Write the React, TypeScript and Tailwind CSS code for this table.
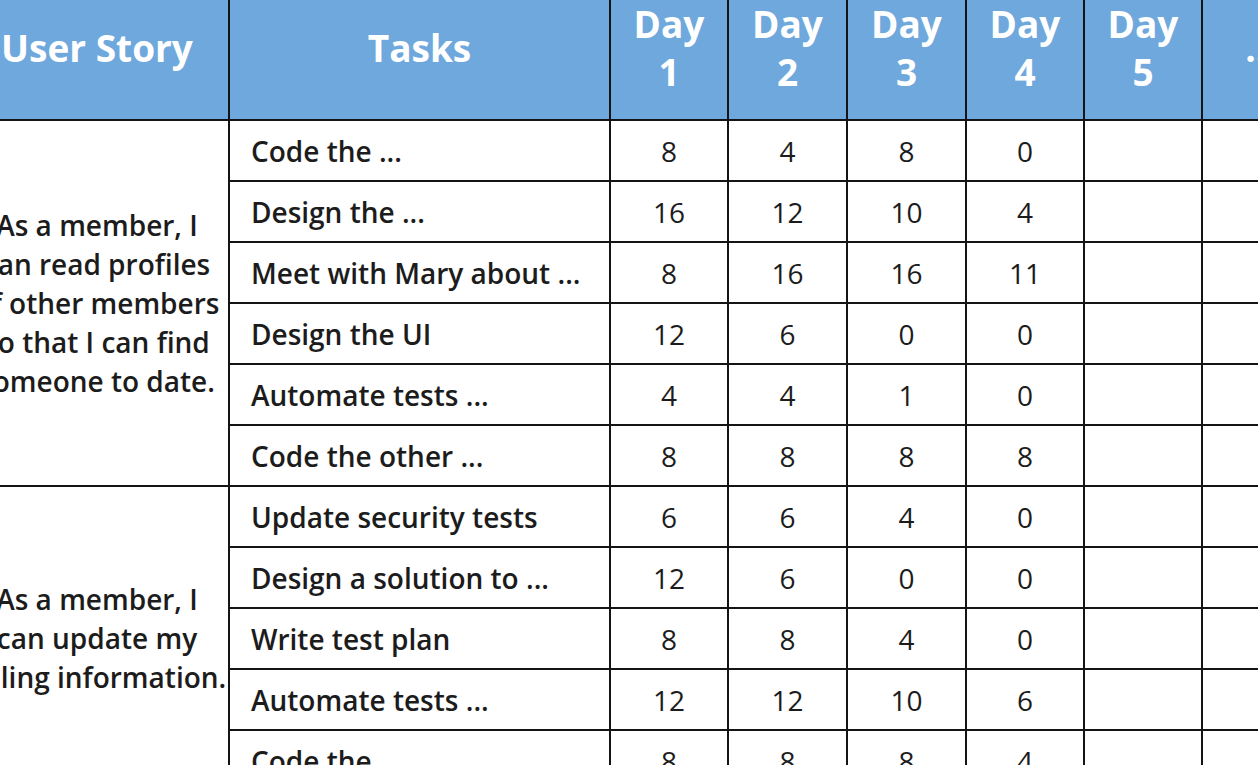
const days = ['1', '2', '3', '4', '5']

const stories = [
	{
		text: ['As a member, I', 'can read profiles', 'of other members', 'so that I can find', 'someone to date.'],
		tasks: [
			{ name: 'Code the ...', hours: [8, 4, 8, 0] },
			{ name: 'Design the ...', hours: [16, 12, 10, 4] },
			{ name: 'Meet with Mary about ...', hours: [8, 16, 16, 11] },
			{ name: 'Design the UI', hours: [12, 6, 0, 0] },
			{ name: 'Automate tests ...', hours: [4, 4, 1, 0] },
			{ name: 'Code the other ...', hours: [8, 8, 8, 8] }
		]
	},
	{
		text: ['As a member, I', 'can update my', 'billing information.'],
		tasks: [
			{ name: 'Update security tests', hours: [6, 6, 4, 0] },
			{ name: 'Design a solution to ...', hours: [12, 6, 0, 0] },
			{ name: 'Write test plan', hours: [8, 8, 4, 0] },
			{ name: 'Automate tests ...', hours: [12, 12, 10, 6] },
			{ name: 'Code the ...', hours: [8, 8, 8, 4] }
		]
	}
]

const cell = 'border-2 border-[#141414]'
const head = `${cell} pb-[7px]`

export default function App() {
	return (
		<div className="h-[765px] w-[1258px] overflow-hidden bg-white font-['Open_Sans',sans-serif]">
			<table className="-ml-[36px] -mt-[19px] w-[1355px] table-fixed border-collapse">
				<colgroup>
					<col className="w-[264px]" />
					<col className="w-[381px]" />
					<col className="w-[118px]" />
					<col className="w-[119px]" />
					<col className="w-[119px]" />
					<col className="w-[118px]" />
					<col className="w-[118px]" />
					<col className="w-[118px]" />
				</colgroup>
				<thead>
					<tr className="h-[138px] bg-[#6fa8dc] text-[37px] font-bold leading-[48px] text-white">
						<th className={head}>User Story</th>
						<th className={head}>Tasks</th>
						{days.map(d => (
							<th key={d} className={head}>
								Day
								<br />
								{d}
							</th>
						))}
						<th className={head}>...</th>
					</tr>
				</thead>
				<tbody className="text-[28px] text-[#1c1c1c]">
					{stories.map((story, si) =>
						story.tasks.map((task, ti) => (
							<tr key={`${si}-${ti}`} className="h-[61px]">
								{ti === 0 && (
									<td
										rowSpan={story.tasks.length}
										className={`${cell} whitespace-nowrap text-center font-semibold leading-[39px]`}
									>
										{story.text.map(line => (
											<div key={line}>{line}</div>
										))}
									</td>
								)}
								<td className={`${cell} whitespace-nowrap pl-[21px] font-semibold`}>
									{task.name}
								</td>
								{task.hours.map((h, hi) => (
									<td key={hi} className={`${cell} text-center`}>
										{h}
									</td>
								))}
								<td className={cell}></td>
								<td className={cell}></td>
							</tr>
						))
					)}
				</tbody>
			</table>
		</div>
	)
}
